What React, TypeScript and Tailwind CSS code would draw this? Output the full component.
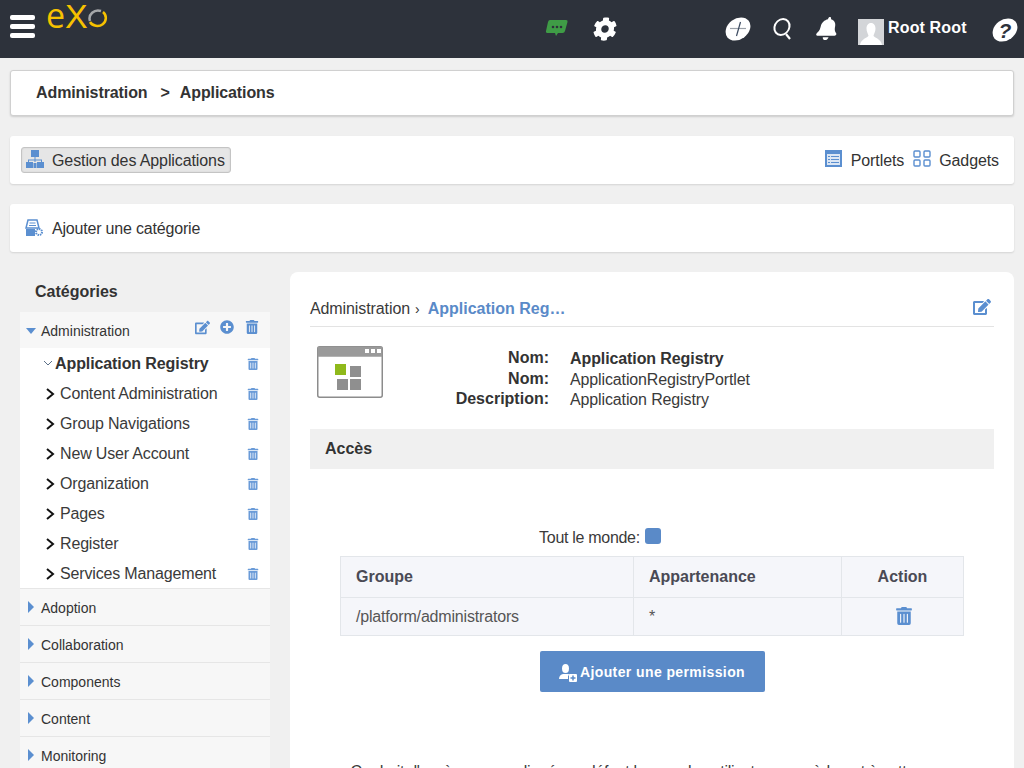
import { FaBell, FaCog, FaEdit, FaPlusCircle, FaTrashAlt } from "react-icons/fa";

const children = ["Content Administration", "Group Navigations", "New User Account", "Organization", "Pages", "Register", "Services Management"];
const categories = ["Adoption", "Collaboration", "Components", "Content", "Monitoring"];

function Chevron() {
  return (
    <svg width="10" height="14" viewBox="0 0 10 14" className="shrink-0">
      <path d="M2 2l6 5-6 5" fill="none" stroke="#111" strokeWidth="2" />
    </svg>
  );
}

function SmallTrash() {
  return <FaTrashAlt className="text-[12px] text-[#6a9bd8]" />;
}

function Logo() {
  return (
    <div className="flex items-start ml-[12px] w-[62px] shrink-0 h-[30px] text-[#f6c100] whitespace-nowrap">
      <span className="text-[34px] leading-[30px] -ml-[1px] font-['Open_Sans',sans-serif]">e</span>
      <span className="text-[34px] leading-[30px] mt-[1px] font-['Liberation_Sans',sans-serif]">X</span>
      <svg width="21" height="20" viewBox="0 0 21 20" className="mt-[9px] shrink-0">
        <path d="M2 12A8.500 8 0 0 1 13 2" fill="none" stroke="#a5a7aa" strokeWidth="2.500" />
        <path d="M15 3A8.500 8 0 1 1 2 13" fill="none" stroke="#f6c100" strokeWidth="2.500" />
      </svg>
    </div>
  );
}

function TopBar() {
  return (
    <header className="h-[58px] bg-[#2d323b] flex items-start text-white shrink-0">
      <div className="ml-[10px] mt-[15px] w-[25px] flex flex-col gap-[4px]">
        <div className="h-[5px] rounded-[2px] bg-white" />
        <div className="h-[5px] rounded-[2px] bg-white" />
        <div className="h-[5px] rounded-[2px] bg-white" />
      </div>
      <Logo />
      <svg width="24" height="20" viewBox="0 0 24 20" className="ml-[436px] mt-[19px] shrink-0">
        <path d="M5 1h16q2 0 1.500 2l-2.500 9q-.5 2-2.500 2H13l-2 3-1-3H3q-2.500 0-2-2L3 3q.5-2 2-2z" fill="#3f9c46" />
        <circle cx="8" cy="8" r="1.300" fill="#2d323b" />
        <circle cx="12" cy="8" r="1.300" fill="#2d323b" />
        <circle cx="16" cy="8" r="1.300" fill="#2d323b" />
      </svg>
      <FaCog className="ml-[24px] mt-[17px] text-[24px] shrink-0 -skew-x-6" />
      <svg width="28" height="26" viewBox="0 0 28 26" className="ml-[107px] mt-[16px] shrink-0">
        <ellipse cx="14" cy="13" rx="12" ry="11.500" fill="#fff" transform="skewX(-15) translate(3.500 0)" />
        <path d="M6 12.500h16" stroke="#9aa0a8" strokeWidth="1.200" />
        <path d="M16.500 6l-4 14" stroke="#3b4a60" strokeWidth="1.200" />
      </svg>
      <svg width="22" height="26" viewBox="0 0 22 26" className="ml-[20px] mt-[16px] shrink-0">
        <ellipse cx="10" cy="11" rx="7.500" ry="8" fill="none" stroke="#fff" strokeWidth="2" transform="skewX(-8) translate(1.500 0)" />
        <path d="M14 18l4 5" stroke="#fff" strokeWidth="2.200" />
      </svg>
      <FaBell className="ml-[22px] mt-[17px] text-[23px] shrink-0 -skew-x-12" />
      <div className="ml-[19px] mt-[19px] w-[26px] h-[26px] shrink-0 bg-[#d3d5d8] overflow-hidden flex justify-center items-end">
        <svg width="22" height="23" viewBox="0 0 22 23">
          <path d="M11 1c3 0 4.500 2.500 4.500 5.500S14 12 13.500 13.500c0 2 7.500 3 8.500 9.500H0c1-6.500 8.500-7.500 8.500-9.500C8 12 6.500 9.500 6.500 6.500S8 1 11 1z" fill="#fff" />
        </svg>
      </div>
      <span className="ml-[4px] mt-[18px] text-[16px] font-bold tracking-[0.150px] leading-[20px] whitespace-nowrap">Root Root</span>
      <svg width="28" height="26" viewBox="0 0 28 26" className="ml-[24px] mt-[17px] shrink-0">
        <ellipse cx="14" cy="13" rx="12" ry="11.500" fill="#fff" transform="skewX(-15) translate(3.500 0)" />
        <text x="14" y="20.500" textAnchor="middle" fontSize="21" fontWeight="700" fontStyle="italic" fill="#2d323b" fontFamily="Liberation Sans">?</text>
      </svg>
    </header>
  );
}

function Card({ className, children }: { className: string; children: React.ReactNode }) {
  return <div className={`mx-[10px] shrink-0 bg-white rounded-[3px] flex items-center ${className}`}>{children}</div>;
}

function SitemapIcon() {
  return (
    <svg width="18" height="18" viewBox="0 0 18 18" className="shrink-0 mb-[2px]" fill="#5b8fd0">
      <rect x="5" y="0" width="8" height="7" />
      <path d="M8.500 7h1v2.500H16V12h-1v-1.500H9.500V12h-1v-1.500H3V12H2V9.500h6.500z" />
      <rect x="0" y="12" width="7" height="6" />
      <rect x="11" y="12" width="7" height="6" />
      <rect x="7.500" y="13" width="3" height="5" />
    </svg>
  );
}

function CategoryIcon() {
  return (
    <svg width="18" height="18" viewBox="0 0 18 18" className="shrink-0 mb-[1px]">
      <path d="M3 1h9l2 8H1z" fill="none" stroke="#5b8fd0" strokeWidth="1.500" />
      <path d="M4.500 4h6M4 6.500h7" stroke="#5b8fd0" strokeWidth="1" />
      <rect x="1" y="10" width="9" height="7" fill="#5b8fd0" />
      <circle cx="14" cy="13" r="3" fill="none" stroke="#5b8fd0" strokeWidth="2" strokeDasharray="1.500 0.800" />
    </svg>
  );
}

function PortletIcon() {
  return (
    <svg width="17" height="17" viewBox="0 0 17 17" className="shrink-0 mb-[3px]">
      <rect width="17" height="17" fill="#5b8fd0" />
      <rect x="2" y="4" width="13" height="11" fill="#dbe6f4" />
      <path d="M3 6.500h2M6 6.500h8M3 9.500h2M6 9.500h8M3 12.500h2M6 12.500h8" stroke="#5b8fd0" strokeWidth="1.200" />
    </svg>
  );
}

function GadgetIcon() {
  return (
    <svg width="18" height="17" viewBox="0 0 18 17" className="shrink-0 mb-[3px]" fill="none" stroke="#5b8fd0" strokeWidth="1.400">
      <rect x="1" y="1" width="6" height="6" rx="1" />
      <rect x="11" y="1" width="6" height="6" rx="1" />
      <rect x="1" y="10" width="6" height="6" rx="1" />
      <rect x="11" y="10" width="6" height="6" rx="1" />
    </svg>
  );
}

function PermissionIcon() {
  return (
    <svg width="18" height="18" viewBox="0 0 18 18" className="shrink-0" fill="#fff">
      <ellipse cx="6.500" cy="4.500" rx="3.500" ry="4.500" />
      <path d="M0 15c0-3 2-4.500 4-5h5c1 .2 2 .8 2.500 1.500H9V15z" />
      <rect x="10" y="10" width="8" height="8" rx="1" />
      <path d="M14 11.500v5M11.500 14h5" stroke="#5a8ac8" strokeWidth="1.500" />
    </svg>
  );
}

function Sidebar() {
  return (
    <aside className="w-[250px] shrink-0 bg-[#f7f7f7]">
      <div className="h-[40px] bg-[#f0f0f0] flex items-center pl-[15px] text-[16px] font-bold">Catégories</div>
      <div className="h-[36px] flex items-center pt-[2px] pl-[6px] pr-[11px] text-[14px]">
        <svg width="10" height="6" viewBox="0 0 10 6" className="mr-[5px]"><path d="M0 0h10L5 6z" fill="#5b8fd0" /></svg>
        <span className="flex-1">Administration</span>
        <FaEdit className="text-[15px] text-[#5b8fd0] mb-[8px]" />
        <FaPlusCircle className="text-[14px] text-[#5b8fd0] ml-[10px] mb-[8px]" />
        <FaTrashAlt className="text-[14px] text-[#5b8fd0] ml-[11px] mb-[8px]" />
      </div>
      <div className="bg-white border-b border-[#e6e6e6]">
        <div className="h-[30px] flex items-center pt-[2px] pl-[23px] pr-[11px]">
          <svg width="10" height="6" viewBox="0 0 10 6" className="shrink-0 mb-[3px]"><path d="M1 1l4 4 4-4" fill="none" stroke="#5b7088" strokeWidth="1" /></svg>
          <span className="flex-1 ml-[2px] text-[16px] font-bold tracking-[-0.100px]">Application Registry</span>
          <SmallTrash />
        </div>
        {children.map((name) => (
          <div key={name} className="h-[30px] flex items-center pt-[2px] pl-[25px] pr-[11px]">
            <Chevron />
            <span className="flex-1 ml-[5px] text-[16px] tracking-[-0.160px] text-[#3a3a3a]">{name}</span>
            <SmallTrash />
          </div>
        ))}
      </div>
      {categories.map((name) => (
        <div key={name} className="h-[37px] flex items-center pt-[2px] pl-[8px] border-b border-[#e6e6e6] text-[14px]">
          <svg width="6" height="12" viewBox="0 0 6 12" className="mb-[3px]"><path d="M0 0l6 6-6 6z" fill="#5b8fd0" /></svg>
          <span className="ml-[7px]">{name}</span>
        </div>
      ))}
    </aside>
  );
}

function AppIcon() {
  return (
    <svg width="66" height="52" viewBox="0 0 66 52" className="shrink-0">
      <rect x="0.750" y="0.750" width="64.500" height="50.500" rx="2" fill="#fff" stroke="#8c8c8c" strokeWidth="1.500" />
      <rect x="0.750" y="0.750" width="64.500" height="10" fill="#9a9a9a" />
      <rect x="48" y="3" width="4" height="4" fill="#fff" />
      <rect x="54" y="3" width="4" height="4" fill="#fff" />
      <rect x="60" y="3" width="4" height="4" fill="#fff" />
      <rect x="18" y="18" width="11" height="11" fill="#8fb91b" />
      <rect x="33" y="20" width="11" height="11" fill="#8f8f8f" />
      <rect x="20" y="33" width="11" height="11" fill="#8f8f8f" />
      <rect x="33" y="33" width="11" height="11" fill="#8f8f8f" />
    </svg>
  );
}

function Detail() {
  return (
    <div className="flex pl-[7px] mt-[19px] h-[64px]">
      <AppIcon />
      <div className="w-[166px] text-right font-bold leading-[20.500px] mt-[2px] whitespace-nowrap">
        <div>Nom:</div>
        <div>Nom:</div>
        <div>Description:</div>
      </div>
      <div className="ml-[21px] leading-[20.500px] mt-[3px] text-[#3a3a3a] tracking-[-0.130px] whitespace-nowrap">
        <div className="font-bold text-[#333] tracking-[-0.100px]">Application Registry</div>
        <div>ApplicationRegistryPortlet</div>
        <div>Application Registry</div>
      </div>
    </div>
  );
}

function Access() {
  return (
    <>
      <div className="h-[40px] mt-[19px] bg-[#f0f0f0] flex items-center pl-[15px] font-bold">Accès</div>
      <div className="mt-[59px] flex justify-center items-center h-[16px] text-[#3a3a3a] mr-[104px]">
        <span className="mt-[3px] tracking-[-0.300px]">Tout le monde:</span>
        <span className="ml-[5px] w-[16px] h-[16px] rounded-[3px] bg-[#5a8ac8]" />
      </div>
      <table className="mx-[30px] mt-[12px] w-[624px] border-collapse table-fixed">
        <thead>
          <tr className="h-[41px] bg-[#f5f6fa] text-left text-[#4a4a55]">
            <th className="w-[293px] border border-[#e3e6ea] pl-[15px]">Groupe</th>
            <th className="w-[208px] border border-[#e3e6ea] pl-[15px]">Appartenance</th>
            <th className="border border-[#e3e6ea] text-center">Action</th>
          </tr>
        </thead>
        <tbody>
          <tr className="h-[38px] bg-[#f5f6fa] text-[#555]">
            <td className="border border-[#e3e6ea] pl-[15px] tracking-[-0.180px]">/platform/administrators</td>
            <td className="border border-[#e3e6ea] pl-[15px]">*</td>
            <td className="border border-[#e3e6ea] pl-[2px]"><FaTrashAlt className="mx-auto mb-[1px] text-[18px] text-[#5b8fd0]" /></td>
          </tr>
        </tbody>
      </table>
      <div className="flex justify-center mt-[15px]">
        <button className="w-[225px] h-[41px] pt-[2px] bg-[#5a8ac8] rounded-[2px] text-white font-bold text-[14px] tracking-[0.400px] flex items-center justify-center gap-[3px]">
          <PermissionIcon />
          Ajouter une permission
        </button>
      </div>
      <p className="mt-[68px] whitespace-nowrap text-center text-[#3a3a3a] tracking-[-0.300px]">
        Ce droit d'accès sera appliqué par défaut lorsque les utilisateurs accèderont à cette page
      </p>
    </>
  );
}

export default function App() {
  return (
    <div className="h-[768px] overflow-hidden bg-[#f0f0f0] flex flex-col text-[16px] text-[#333] font-['Liberation_Sans',Arial,sans-serif]">
      <TopBar />
      <Card className="mt-[12px] h-[46px] border border-[#d0d0d0] shadow-[0_1px_2px_rgba(0,0,0,0.15)] pl-[25px] font-bold whitespace-nowrap tracking-[-0.100px]">
        <span>Administration</span>
        <span className="ml-[13px]">&gt;</span>
        <span className="ml-[10px]">Applications</span>
      </Card>
      <Card className="mt-[20px] h-[48px] shadow-[0_1px_2px_rgba(0,0,0,0.12)] pl-[11px] pr-[15px]">
        <div className="h-[26px] w-[210px] flex items-center bg-[#e6e6e6] border border-[#c4c4c4] rounded-[3px] pl-[4px] shadow-[inset_0_0_2px_rgba(0,0,0,0.1)]">
          <SitemapIcon />
          <span className="ml-[8px] mt-[2px] whitespace-nowrap tracking-[-0.100px]">Gestion des Applications</span>
        </div>
        <div className="ml-auto flex items-center tracking-[-0.100px]">
          <PortletIcon />
          <span className="ml-[9px] mt-[2px]">Portlets</span>
          <span className="ml-[9px]"><GadgetIcon /></span>
          <span className="ml-[8px] mt-[2px]">Gadgets</span>
        </div>
      </Card>
      <Card className="mt-[20px] h-[48px] shadow-[0_1px_2px_rgba(0,0,0,0.12)] pl-[15px]">
        <CategoryIcon />
        <span className="ml-[9px] mt-[2px] tracking-[-0.190px]">Ajouter une catégorie</span>
      </Card>
      <div className="flex shrink-0 mt-[20px] pl-[20px] pr-[10px] gap-[20px] items-start">
        <Sidebar />
        <main className="flex-1 bg-white rounded-t-[8px] px-[20px] h-[496px] overflow-hidden">
          <div className="mt-[24px] h-[31px] flex items-start border-b border-[#e3e3e3] leading-[26px]">
            <span className="text-[#3a3a3a] tracking-[-0.100px]">Administration</span>
            <span className="ml-[5px] text-[14px]">›</span>
            <span className="ml-[8px] font-bold text-[#5a8ac8]">Application Reg…</span>
            <FaEdit className="ml-auto mt-[2px] mr-[3px] text-[18px] text-[#5b8fd0]" />
          </div>
          <Detail />
          <Access />
        </main>
      </div>
    </div>
  );
}
